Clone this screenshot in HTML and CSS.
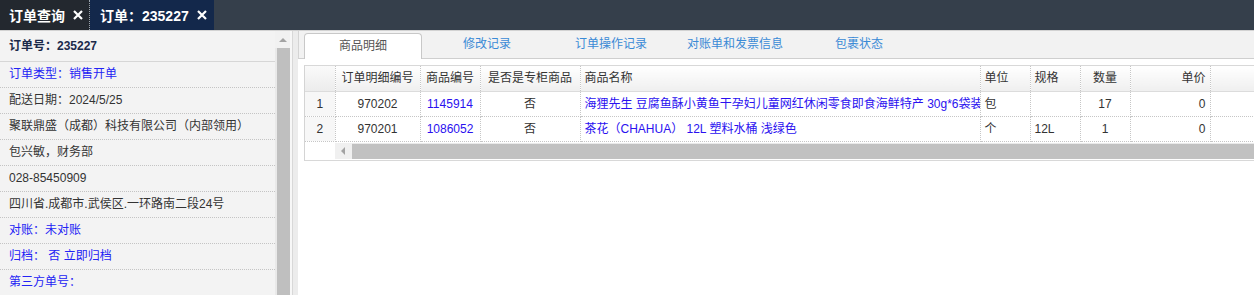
FILE: index.html
```html
<!DOCTYPE html>
<html lang="zh-CN">
<head>
    <meta charset="UTF-8">
    <title>订单：235227</title>
    <link rel="stylesheet" href="styles.css">
</head>
<body>

    <!-- Top bar with page tabs -->
    <div class="top-bar">
        <div class="page-tab">
            <span>订单查询</span>
            <svg class="close" viewBox="0 0 10 10"><path d="M1 1L9 9M9 1L1 9"/></svg>
        </div>
        <div class="page-tab active">
            <span>订单：235227</span>
            <svg class="close" viewBox="0 0 10 10"><path d="M1 1L9 9M9 1L1 9"/></svg>
        </div>
    </div>

    <div class="main">
        <!-- Order summary on the left -->
        <div class="side">
            <div class="side-row title">订单号：235227</div>
            <div class="side-row link">订单类型：销售开单</div>
            <div class="side-row">配送日期：2024/5/25</div>
            <div class="side-row">聚联鼎盛（成都）科技有限公司（内部领用）</div>
            <div class="side-row">包兴敏，财务部</div>
            <div class="side-row">028-85450909</div>
            <div class="side-row">四川省.成都市.武侯区.一环路南二段24号</div>
            <div class="side-row link">对账：未对账</div>
            <div class="side-row link">归档：&nbsp;否 立即归档</div>
            <div class="side-row link">第三方单号：</div>
        </div>
        <div class="vscroll">
            <div class="arrow-up"></div>
            <div class="thumb"></div>
        </div>
        <div class="gutter"></div>

        <!-- Detail tabs and grid -->
        <div class="content">
            <div class="tabs">
                <div class="tab active">商品明细</div>
                <div class="tab">修改记录</div>
                <div class="tab">订单操作记录</div>
                <div class="tab">对账单和发票信息</div>
                <div class="tab">包裹状态</div>
            </div>
            <div class="tab-body">
                <div class="grid">
                    <table>
                        <colgroup>
                            <col style="width:30px">
                            <col style="width:85px">
                            <col style="width:60px">
                            <col style="width:100px">
                            <col style="width:400px">
                            <col style="width:50px">
                            <col style="width:50px">
                            <col style="width:50px">
                            <col style="width:80px">
                            <col style="width:60px">
                        </colgroup>
                        <thead>
                            <tr>
                                <th class="num"></th>
                                <th>订单明细编号</th>
                                <th>商品编号</th>
                                <th>是否是专柜商品</th>
                                <th class="left">商品名称</th>
                                <th class="left">单位</th>
                                <th class="left">规格</th>
                                <th>数量</th>
                                <th class="right">单价</th>
                                <th></th>
                            </tr>
                        </thead>
                        <tbody>
                            <tr>
                                <td class="num">1</td>
                                <td>970202</td>
                                <td class="blue">1145914</td>
                                <td>否</td>
                                <td class="left blue">海狸先生 豆腐鱼酥小黄鱼干孕妇儿童网红休闲零食即食海鲜特产 30g*6袋装</td>
                                <td class="left">包</td>
                                <td class="left"></td>
                                <td>17</td>
                                <td class="right">0</td>
                                <td></td>
                            </tr>
                            <tr>
                                <td class="num">2</td>
                                <td>970201</td>
                                <td class="blue">1086052</td>
                                <td>否</td>
                                <td class="left blue">茶花（CHAHUA） 12L 塑料水桶 浅绿色</td>
                                <td class="left">个</td>
                                <td class="left">12L</td>
                                <td>1</td>
                                <td class="right">0</td>
                                <td></td>
                            </tr>
                        </tbody>
                    </table>
                    <div class="hscroll">
                        <div class="arrow-left"></div>
                        <div class="hthumb"></div>
                    </div>
                </div>
            </div>
        </div>
    </div>

</body>
</html>
```

FILE: styles.css
```css
/* Reset */
* {
    margin: 0;
    padding: 0;
    box-sizing: border-box;
}

body {
    width: 1254px;
    height: 295px;
    overflow: hidden;
    background-color: #fff;
    font-family: "Liberation Sans", "Noto Sans CJK SC", sans-serif;
    font-size: 12px;
    color: #333;
}

/* Top bar */
.top-bar {
    display: flex;
    height: 31px;
    background-color: #353f4b;
    border-bottom: 1px solid #d2d2d2;
}

.page-tab {
    display: flex;
    align-items: center;
    gap: 8px;
    padding: 0 6px 0 9px;
    background-color: #23282f;
    color: #fff;
    font-size: 14px;
    font-weight: bold;
    border-right: 1px dotted #9aa3ad;
}

.page-tab.active {
    background-color: #13284b;
    padding: 0 7px 0 10px;
    border-right: none;
}

.page-tab .close {
    width: 10px;
    height: 10px;
    stroke: #fff;
    stroke-width: 2.2;
    fill: none;
}

/* Main area */
.main {
    display: flex;
    height: 264px;
}

/* Left order summary */
.side {
    width: 275px;
    flex-shrink: 0;
    background-color: #f3f3f3;
}

.side-row {
    height: 26px;
    line-height: 25px;
    padding-left: 9px;
    border-bottom: 1px dotted #c4c4c4;
    white-space: nowrap;
}

.side-row.title {
    height: 31px;
    line-height: 30px;
    font-weight: bold;
    color: #1b2a4a;
    border-bottom: 1px solid #d6d6d6;
}

.side-row.link {
    color: #2323f5;
}

/* Vertical scrollbar */
.vscroll {
    width: 15px;
    flex-shrink: 0;
    display: flex;
    flex-direction: column;
    background-color: #e9e9e9;
}

.arrow-up {
    height: 17px;
    position: relative;
    background-color: #f1f1f1;
}

.arrow-up::after {
    content: "";
    position: absolute;
    left: 4px;
    top: 7px;
    border-left: 4px solid transparent;
    border-right: 4px solid transparent;
    border-bottom: 4px solid #a3a3a3;
}

.thumb {
    flex-grow: 1;
    margin-left: 2px;
    background-color: #bfbfbf;
}

.gutter {
    width: 8px;
    flex-shrink: 0;
    background: linear-gradient(to right, #f7f7f7 0 2px, #d8d8d8 2px 3px, #ececec 3px);
}

/* Right content */
.content {
    flex-grow: 1;
    min-width: 0;
    overflow: hidden;
    display: flex;
    flex-direction: column;
}

.tabs {
    display: flex;
    align-items: flex-end;
    height: 28px;
    padding-left: 5px;
    background-color: #f2f2f2;
    border-left: 1px solid #d4d4d4;
    border-bottom: 1px solid #cfcfcf;
}

.tab {
    width: 118px;
    flex-shrink: 0;
    height: 26px;
    margin-right: 6px;
    line-height: 25px;
    text-align: center;
    font-size: 12px;
    color: #3a8ad6;
}

.tab.active {
    height: 26px;
    margin-bottom: -1px;
    background-color: #fff;
    color: #555;
    border: 1px solid #c8c8c8;
    border-bottom: none;
    border-radius: 4px 4px 0 0;
}

.tab-body {
    flex-grow: 1;
    padding: 6px 0 0 6px;
    background-color: #fff;
}

/* Detail grid */
.grid {
    width: 1000px;
    border-left: 1px solid #d4d4d4;
    border-top: 1px solid #d8d8d8;
    border-bottom: 1px solid #d8d8d8;
    padding-bottom: 1px;
}

table {
    table-layout: fixed;
    width: 965px;
    border-collapse: collapse;
}

th, td {
    height: 25px;
    padding: 0 4px;
    line-height: 24px;
    font-weight: normal;
    text-align: center;
    white-space: nowrap;
    overflow: hidden;
    border-right: 1px dotted #c6c6c6;
    border-bottom: 1px dotted #c6c6c6;
}

th {
    background: linear-gradient(#fff, #efefef);
    border-bottom: 1px solid #dcdcdc;
}

.num {
    background: #f7f7f7;
    padding: 0;
}

th.num {
    background: linear-gradient(#fafafa, #ececec);
}

.left {
    text-align: left;
}

.right {
    text-align: right;
}

.blue {
    color: #2a10f0;
}

/* Horizontal scrollbar */
.hscroll {
    display: flex;
    height: 16px;
    margin: 1px 0 0 30px;
    background-color: #e9e9e9;
}

.arrow-left {
    width: 17px;
    position: relative;
    background-color: #f0f0f0;
}

.arrow-left::after {
    content: "";
    position: absolute;
    left: 6px;
    top: 4px;
    border-top: 4px solid transparent;
    border-bottom: 4px solid transparent;
    border-right: 4px solid #a3a3a3;
}

.hthumb {
    flex-grow: 1;
    margin-top: 1px;
    background-color: #c1c1c1;
}
```
